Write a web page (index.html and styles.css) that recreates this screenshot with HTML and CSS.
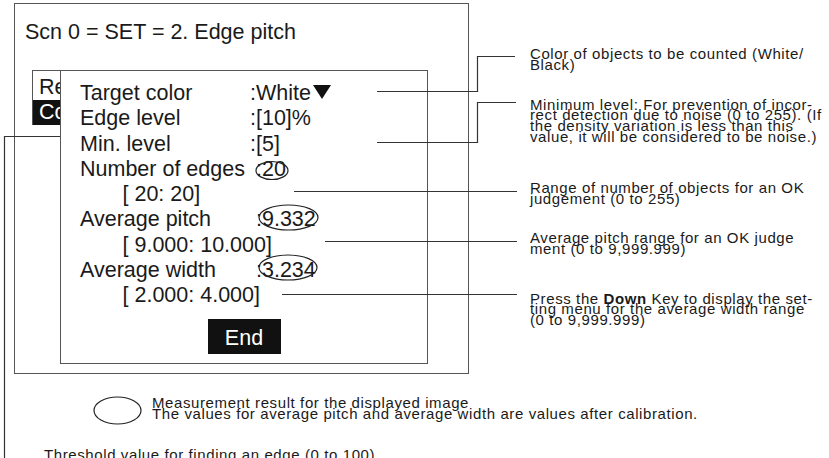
FILE: index.html
```html
<!DOCTYPE html>
<html lang="en">
<head>
    <meta charset="UTF-8">
    <meta name="viewport" content="width=device-width, initial-scale=1.0">
    <title>Edge pitch settings</title>

    <link rel="stylesheet" href="styles.css">
</head>
<body>
    <div class="figure">

        <!-- Monitor screen -->
        <div class="screen">
            <div class="screen-title">Scn 0 = SET = 2. Edge pitch</div>

            <!-- Menu behind the settings window -->
            <div class="menu">
                <div class="menu-item">Re</div>
                <div class="menu-item selected">Co</div>
            </div>

            <!-- Settings window -->
            <div class="dialog">
                <div class="fields">
                    <div class="row"><span class="label">Target color</span><span class="value">:White<svg class="tri" width="20" height="14" viewBox="0 0 20 14"><polygon points="1,0 19,0 10,14"/></svg></span></div>
                    <div class="row"><span class="label">Edge level</span><span class="value">:[10]%</span></div>
                    <div class="row"><span class="label">Min. level</span><span class="value">:[5]</span></div>
                    <div class="row"><span class="label">Number of edges</span><span class="value measured">:20</span></div>
                    <div class="row range">[ 20: 20]</div>
                    <div class="row"><span class="label">Average pitch</span><span class="value measured">:9.332</span></div>
                    <div class="row range">[ 9.000: 10.000]</div>
                    <div class="row"><span class="label">Average width</span><span class="value measured">:3.234</span></div>
                    <div class="row range">[ 2.000: 4.000]</div>
                </div>
                <div class="end-btn">End</div>
            </div>
        </div>

        <!-- Legend -->
        <div class="legend">
            <svg class="legend-mark" width="49" height="29" viewBox="0 0 49 29"><ellipse cx="24.5" cy="14.5" rx="23.5" ry="13.5"/></svg>
            <p>Measurement result for the displayed image<br>The values for average pitch and average width are values after calibration.</p>
        </div>
        <p class="threshold">Threshold value for finding an edge (0 to 100)</p>

        <!-- Leader lines and result marks -->
        <svg class="leaders" width="829" height="458" viewBox="0 0 829 458">
            <polyline points="377,91.5 477.5,91.5 477.5,56.5 515,56.5"/>
            <polyline points="377,142.5 477.5,142.5 477.5,102.5 516,102.5"/>
            <line x1="294" y1="191.5" x2="517" y2="191.5"/>
            <line x1="325" y1="241.5" x2="517" y2="241.5"/>
            <line x1="282" y1="294.5" x2="517" y2="294.5"/>
            <polyline points="60,136.5 4.5,136.5 4.5,470"/>
            <ellipse cx="272" cy="170.5" rx="16" ry="9"/>
            <ellipse cx="288.5" cy="217.5" rx="29.5" ry="12.5"/>
            <ellipse cx="288" cy="267.5" rx="29" ry="12.5"/>
        </svg>

        <!-- Callout notes -->
        <p class="note note-color">Color of objects to be counted (White/<br>Black)</p>
        <p class="note note-min">Minimum level: For prevention of incor-<br>rect detection due to noise (0 to 255). (If<br>the density variation is less than this<br>value, it will be considered to be noise.)</p>
        <p class="note note-count">Range of number of objects for an OK<br>judgement (0 to 255)</p>
        <p class="note note-pitch">Average pitch range for an OK judge<br>ment (0 to 9,999.999)</p>
        <p class="note note-width">Press the <b>Down</b> Key to display the set-<br>ting menu for the average width range<br>(0 to 9,999.999)</p>

    </div>
</body>
</html>
```

FILE: styles.css
```css
/* Global Reset */
* {
    margin: 0;
    padding: 0;
    box-sizing: border-box;
}

body {
    font-family: 'Liberation Sans', Arial, sans-serif;
    color: #1a1a1a;
    background-color: #fff;
}

.figure {
    position: relative;
    width: 829px;
    height: 458px;
    overflow: hidden;
    padding-top: 3px;
}

/* Monitor screen */
.screen {
    position: relative;
    width: 455px;
    height: 371px;
    margin-left: 14px;
    border: 1px solid #555;
    font-size: 21.5px;
}

.screen-title {
    line-height: 25px;
    padding: 16px 0 0 10px;
}

.menu {
    width: 200px;
    margin: 25px 0 0 17px;
    border-top: 1px solid #555;
    border-left: 1px solid #555;
    line-height: 25px;
}

.menu-item {
    padding-left: 6px;
}

.menu-item:first-child {
    padding-top: 4px;
}

.menu-item.selected {
    background-color: #111;
    color: #fff;
}

/* Settings window */
.dialog {
    position: absolute;
    left: 45px;
    top: 66px;
    width: 368px;
    height: 294px;
    border: 1px solid #555;
    background-color: #fff;
    padding-top: 10px;
}

.fields {
    padding-left: 19px;
    line-height: 25.3px;
}

.row {
    display: flex;
    white-space: nowrap;
}

.row .label {
    width: 170px;
}

.row .value.measured {
    margin-left: 6px;
}

.row.range {
    padding-left: 42.5px;
}

.tri {
    vertical-align: 1px;
    margin-left: 1px;
    fill: #111;
}

.end-btn {
    width: 73px;
    height: 35px;
    margin: 10px auto 0;
    padding-top: 4px;
    background-color: #111;
    color: #fff;
    line-height: 31px;
    text-align: center;
}

/* Notes */
.note,
.legend p,
.threshold {
    font-size: 15px;
    line-height: 10.8px;
    letter-spacing: 0.6px;
    white-space: nowrap;
}

.legend {
    display: flex;
    align-items: flex-start;
    gap: 10px;
    margin: 22px 0 0 93px;
}

.legend p {
    margin-top: 2px;
}

.legend-mark ellipse {
    fill: none;
    stroke: #222;
    stroke-width: 1.2;
}

.threshold {
    margin: 25px 0 0 44px;
}

/* Leader lines */
.leaders {
    position: absolute;
    top: 0;
    left: 0;
    pointer-events: none;
}

.leaders polyline,
.leaders line {
    fill: none;
    stroke: #333;
    stroke-width: 1.2;
}

.leaders ellipse {
    fill: none;
    stroke: #222;
    stroke-width: 1.2;
}

.note {
    position: absolute;
    left: 530px;
}

.note-color { top: 49px; }
.note-min { top: 99.5px; }
.note-count { top: 183px; }
.note-pitch { top: 233px; }
.note-width { top: 293.5px; }
```
